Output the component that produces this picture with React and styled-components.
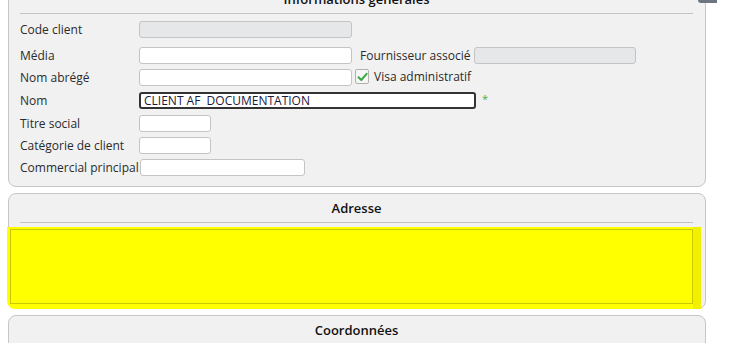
import React from 'react';
import styled, { createGlobalStyle } from 'styled-components';

const GlobalStyle = createGlobalStyle`
  html, body {
    margin: 0;
    padding: 0;
    background: #ffffff;
    overflow: hidden;
  }

  body {
    font-family: "Open Sans", "Noto Sans", sans-serif;
    color: #2b2b2b;
  }
`;

export const Page = styled.div`
  position: relative;
  display: flex;
  flex-direction: column;
  gap: 6px;
  padding: 0 0 0 8px;
  width: 698px;
  height: 343px;
`;

export const TopTab = styled.div`
  position: absolute;
  top: 0;
  left: 698px;
  width: 19px;
  height: 3px;
  background: #6c7680;
  border-bottom-left-radius: 3px;
  z-index: 1;
`;

export const Panel = styled.section`
  box-sizing: border-box;
  flex: none;
  display: flex;
  flex-direction: column;
  margin-top: ${props => props.offset || 0}px;
  padding: 0 12px ${props => props.bottom || 0}px 11px;
  min-height: ${props => props.minHeight || 0}px;

  border: 1px solid #c6c6c6;
  border-radius: 8px;

  background: #f1f1f1;
`;

export const PanelTitle = styled.h2`
  box-sizing: border-box;
  flex: none;
  margin: 0;
  height: 29px;
  padding-top: 5px;

  border-bottom: 1px solid #c4c4c4;

  font-family: "Open Sans", sans-serif;
  font-size: 13px;
  font-weight: 600;
  color: #111111;
  text-align: center;
  line-height: 19px;
`;

export const Form = styled.div`
  flex: none;
  display: flex;
  flex-direction: column;
  padding-top: 7px;
`;

export const Row = styled.div`
  flex: none;
  display: flex;
  align-items: flex-start;
  height: ${props => props.h}px;
`;

export const Label = styled.label`
  flex: none;
  width: ${props => props.width || 119}px;
  font-size: 12px;
  font-weight: 500;
  line-height: 17px;
  color: #2b2b2b;
  white-space: nowrap;
`;

export const Input = styled.div`
  box-sizing: border-box;
  flex: none;
  width: ${props => props.width}px;
  height: 17px;
  padding: 0 3px;

  border: ${props => (props.focused ? '2px solid #333333' : '1px solid #c4c4c4')};
  border-radius: 3px;

  background: ${props => (props.disabled ? '#e5e7e9' : '#ffffff')};

  font-size: 12px;
  line-height: 14px;
  color: #1a1a3a;
  white-space: nowrap;
  overflow: hidden;
`;

export const SideLabel = styled.span`
  margin: 0 4px 0 8px;
  font-size: 12px;
  font-weight: 500;
  line-height: 17px;
  color: #2b2b2b;
  white-space: nowrap;
`;

export const CheckBox = styled.span`
  box-sizing: border-box;
  display: flex;
  align-items: center;
  justify-content: center;
  margin-left: 3px;
  width: 14px;
  height: 15px;

  border: 1px solid #b0b0b0;
  border-radius: 2px;

  background: #f6f6f6;
`;

export const CheckText = styled.span`
  margin-left: 5px;
  font-size: 12px;
  font-weight: 500;
  line-height: 16px;
  color: #2b2b2b;
`;

export const Required = styled.span`
  margin-left: 6px;
  font-size: 11px;
  line-height: 14px;
  color: #4caf50;
`;

export const Highlight = styled.div`
  flex: none;
  display: flex;
  margin: 4px -8px -1px -13px;
  padding: 2px 8px 5px 3px;
  height: 75px;

  border-bottom-left-radius: 8px;

  background: #ffff00;
  box-shadow: inset -8px 0 0 #f0f000;
`;

export const HighlightBox = styled.div`
  flex: 1;
  border: 1px solid #c9c900;
`;

const Check = () => (
  <svg width="11" height="10" viewBox="0 0 11 10">
    <path d="M1.5 5.2 L4.3 8 L9.6 1.8" fill="none" stroke="#3aa845" strokeWidth="2" strokeLinecap="round" strokeLinejoin="round" />
  </svg>
);

export class App extends React.Component {
  render() {
    return (
      <Page>
        <GlobalStyle />
        <TopTab />
        <Panel offset={-16} bottom={10}>
          <PanelTitle>Informations générales</PanelTitle>
          <Form>
            <Row h={26}>
              <Label>Code client</Label>
              <Input width={213} disabled />
            </Row>
            <Row h={22}>
              <Label>Média</Label>
              <Input width={213} />
              <SideLabel>Fournisseur associé</SideLabel>
              <Input width={162} disabled />
            </Row>
            <Row h={23}>
              <Label>Nom abrégé</Label>
              <Input width={213} />
              <CheckBox><Check /></CheckBox>
              <CheckText>Visa administratif</CheckText>
            </Row>
            <Row h={23}>
              <Label>Nom</Label>
              <Input width={337} focused>CLIENT AF&nbsp; DOCUMENTATION</Input>
              <Required>*</Required>
            </Row>
            <Row h={22}>
              <Label>Titre social</Label>
              <Input width={72} />
            </Row>
            <Row h={22}>
              <Label>Catégorie de client</Label>
              <Input width={72} />
            </Row>
            <Row h={17}>
              <Label width={120}>Commercial principal</Label>
              <Input width={165} />
            </Row>
          </Form>
        </Panel>
        <Panel>
          <PanelTitle>Adresse</PanelTitle>
          <Highlight>
            <HighlightBox />
          </Highlight>
        </Panel>
        <Panel minHeight={80}>
          <PanelTitle>Coordonnées</PanelTitle>
        </Panel>
      </Page>
    );
  }
}

export default App;
